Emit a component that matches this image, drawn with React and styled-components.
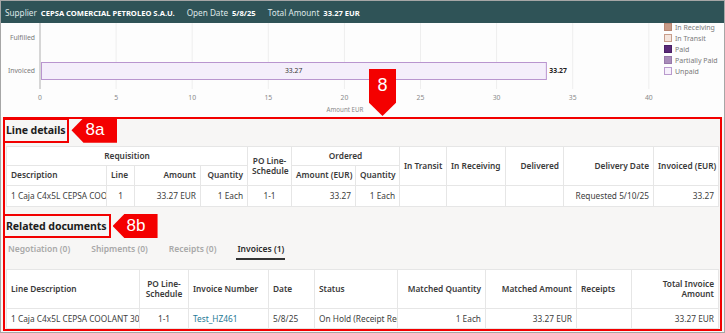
import styled, { createGlobalStyle } from "styled-components";

const GlobalStyle = createGlobalStyle`
  html, body {
    margin: 0;
    padding: 0;
    background: #ffffff;
  }
  * {
    box-sizing: border-box;
  }
`;

const Page = styled.div`
  position: relative;
  width: 725px;
  height: 333px;
  overflow: hidden;
  border: 1px solid #a6a6a6;
  background: #f7f6f5;
  font-family: "Noto Sans", "Open Sans", sans-serif;
  color: #333;
`;

const TopBar = styled.div`
  height: 22px;
  display: flex;
  align-items: center;
  gap: 12px;
  padding-left: 4px;
  background: #2f5357;
  color: #fff;
  font-size: 8.2px;
`;

const Field = styled.span`
  display: flex;
  align-items: baseline;
  gap: 4px;
  color: #dfe7e7;
  white-space: nowrap;

  b {
    color: #fff;
    font-weight: 700;
    font-size: 7.6px;
  }
`;

const ChartRow = styled.div`
  height: 94px;
  display: flex;
  background: #fdfdfd;
`;

const Legend = styled.ul`
  list-style: none;
  margin: 0;
  padding: 0 0 0 6px;
  display: flex;
  flex-direction: column;
  gap: 3px;
`;

const LegendItem = styled.li`
  display: flex;
  align-items: center;
  gap: 3px;
  height: 8px;
  font-size: 7px;
  color: #7a7a7a;

  &::before {
    content: "";
    width: 6px;
    height: 6px;
    background: ${(p) => p.$fill};
    border: 1px solid ${(p) => p.$stroke};
  }
`;

const Marker = styled.div`
  position: absolute;
  left: 368px;
  top: 68px;
  width: 27px;
  height: 47px;
  background: #f40000;
  clip-path: polygon(0 0, 100% 0, 100% 72%, 50% 100%, 0 72%);
  color: #fff;
  font-family: "Liberation Sans", Arial, sans-serif;
  font-size: 18px;
  text-align: center;
  padding-top: 6px;
`;

const Frame = styled.section`
  margin: 0 2px;
  height: 214px;
  border: 2px solid #f20000;
  display: flex;
  flex-direction: column;
`;

const HeadingRow = styled.div`
  display: flex;
  align-items: stretch;
  gap: 2px;
  height: 25px;
  margin: ${(p) => p.$margin};
`;

const HeadingBox = styled.h2`
  margin: 0;
  display: flex;
  align-items: center;
  padding: 0 2px 0 1px;
  border: 2px solid #f20000;
  font-size: 10.6px;
  font-weight: 700;
  color: #1d1d1d;
  white-space: nowrap;
  letter-spacing: -0.1px;
`;

const Badge = styled.div`
  width: ${(p) => p.$width}px;
  background: #f40000;
  clip-path: polygon(0 50%, 12px 0, 100% 0, 100% 100%, 12px 100%);
  color: #fff;
  font-family: "Liberation Sans", Arial, sans-serif;
  font-size: 17px;
  display: flex;
  align-items: center;
  padding-left: 14px;
`;

const Table = styled.table`
  table-layout: fixed;
  border-collapse: collapse;
  width: 712px;
  margin: ${(p) => p.$margin};
  background: #fff;
  font-size: 8.3px;

  th, td {
    border: 1px solid #e6e6e6;
    padding: 0 4px;
    white-space: nowrap;
    overflow: hidden;
    text-overflow: clip;
    text-align: left;
  }

  th {
    font-weight: 600;
    color: #3a3a3a;
    line-height: 10px;
  }

  td {
    color: #404040;
  }

  .r { text-align: right; }
  .c { text-align: center; }
  .wrap { white-space: normal; }
`;

const Tabs = styled.nav`
  display: flex;
  gap: 19px;
  height: 22px;
  padding-left: 1px;
  margin-left: 1px;
`;

const Tab = styled.span`
  display: flex;
  align-items: center;
  padding: 0 1px;
  font-size: 8.5px;
  font-weight: 600;
  color: ${(p) => (p.$active ? "#2b2b2b" : "#a9a9a9")};
  border-bottom: 2px solid ${(p) => (p.$active ? "#333" : "transparent")};
`;

const Link = styled.span`
  color: #1f7996;
`;

const ticks = [0, 5, 10, 15, 20, 25, 30, 35, 40];
const xOf = (v) => 39 + v * 15.22;

const Chart = () => (
  <svg width="657" height="94" viewBox="0 0 657 94">
    {ticks.slice(1).map((t) => (
      <line key={t} x1={xOf(t)} x2={xOf(t)} y1="0" y2="66" stroke="#eeeeee" strokeWidth="1" />
    ))}
    <line x1="39" x2="39" y1="0" y2="66" stroke="#d6d6d6" strokeWidth="2" />
    <g fontFamily="Noto Sans, sans-serif" fontSize="6.8" fill="#7a7a7a" textAnchor="end">
      <text x="34" y="17">Fulfilled</text>
      <text x="34" y="50">Invoiced</text>
    </g>
    <rect x="40.5" y="39.5" width={xOf(33.27) - 40.5} height="17" fill="#f4eefb" stroke="#b995cf" strokeWidth="1" />
    <text x={(40 + xOf(33.27)) / 2} y="50" fontFamily="Noto Sans, sans-serif" fontSize="6.8" fill="#333" textAnchor="middle">33.27</text>
    <text x={xOf(33.27) + 3} y="50" fontFamily="Noto Sans, sans-serif" fontSize="6.8" fontWeight="700" fill="#222">33.27</text>
    <g fontFamily="Noto Sans, sans-serif" fontSize="6.8" fill="#8a8a8a" textAnchor="middle">
      {ticks.map((t) => (
        <text key={t} x={xOf(t)} y="77">{t}</text>
      ))}
      <text x="344" y="89" fontSize="6.2">Amount EUR</text>
    </g>
  </svg>
);

const legend = [
  ["In Receiving", "#c89a86", "#b88672"],
  ["In Transit", "#f4e4dc", "#c79d8b"],
  ["Paid", "#5a2a78", "#4a1f66"],
  ["Partially Paid", "#a88cb9", "#9677a9"],
  ["Unpaid", "#f6f0fb", "#b99acd"],
];

export default function App() {
  return (
    <>
      <GlobalStyle />
      <Page>
        <TopBar>
          <Field>Supplier <b>CEPSA COMERCIAL PETROLEO S.A.U.</b></Field>
          <Field>Open Date <b>5/8/25</b></Field>
          <Field>Total Amount <b>33.27 EUR</b></Field>
        </TopBar>

        <ChartRow>
          <Chart />
          <Legend>
            {legend.map(([label, fill, stroke]) => (
              <LegendItem key={label} $fill={fill} $stroke={stroke}>{label}</LegendItem>
            ))}
          </Legend>
        </ChartRow>

        <Marker>8</Marker>

        <Frame>
          <HeadingRow $margin="-1px 0 0 -2px">
            <HeadingBox>Line details</HeadingBox>
            <Badge $width={46}>8a</Badge>
          </HeadingRow>

          <Table $margin="3px 0 0 1px">
            <colgroup>
              {[100, 28, 66, 47, 44, 64, 44, 47, 59, 58, 90, 65].map((w, i) => (
                <col key={i} style={{ width: w }} />
              ))}
            </colgroup>
            <thead>
              <tr style={{ height: 19 }}>
                <th colSpan={4} className="c">Requisition</th>
                <th rowSpan={2} className="c wrap">PO Line-<br />Schedule</th>
                <th colSpan={2} className="c">Ordered</th>
                <th rowSpan={2}>In Transit</th>
                <th rowSpan={2}>In Receiving</th>
                <th rowSpan={2} className="r">Delivered</th>
                <th rowSpan={2} className="r">Delivery Date</th>
                <th rowSpan={2} className="r">Invoiced (EUR)</th>
              </tr>
              <tr style={{ height: 20 }}>
                <th>Description</th>
                <th>Line</th>
                <th className="r">Amount</th>
                <th className="r">Quantity</th>
                <th className="r">Amount (EUR)</th>
                <th className="r">Quantity</th>
              </tr>
            </thead>
            <tbody>
              <tr style={{ height: 21 }}>
                <td>1 Caja C4x5L CEPSA COOLANT 30%</td>
                <td className="c">1</td>
                <td className="r">33.27 EUR</td>
                <td className="r">1 Each</td>
                <td className="c">1-1</td>
                <td className="r">33.27</td>
                <td className="r">1 Each</td>
                <td></td>
                <td></td>
                <td></td>
                <td className="r">Requested 5/10/25</td>
                <td className="r">33.27</td>
              </tr>
            </tbody>
          </Table>

          <HeadingRow $margin="7px 0 0 -2px">
            <HeadingBox>Related documents</HeadingBox>
            <Badge $width={45}>8b</Badge>
          </HeadingRow>

          <Tabs>
            <Tab>Negotiation (0)</Tab>
            <Tab>Shipments (0)</Tab>
            <Tab>Receipts (0)</Tab>
            <Tab $active>Invoices (1)</Tab>
          </Tabs>

          <Table $margin="9px 0 0 1px">
            <colgroup>
              {[133, 49, 80, 46, 83, 88, 91, 55, 87].map((w, i) => (
                <col key={i} style={{ width: w }} />
              ))}
            </colgroup>
            <thead>
              <tr style={{ height: 39 }}>
                <th>Line Description</th>
                <th className="c wrap">PO Line-<br />Schedule</th>
                <th>Invoice Number</th>
                <th>Date</th>
                <th>Status</th>
                <th className="r">Matched Quantity</th>
                <th className="r">Matched Amount</th>
                <th>Receipts</th>
                <th className="r wrap">Total Invoice<br />Amount</th>
              </tr>
            </thead>
            <tbody>
              <tr style={{ height: 20 }}>
                <td>1 Caja C4x5L CEPSA COOLANT 30%</td>
                <td className="c">1-1</td>
                <td><Link>Test_HZ461</Link></td>
                <td>5/8/25</td>
                <td>On Hold (Receipt Required)</td>
                <td className="r">1 Each</td>
                <td className="r">33.27 EUR</td>
                <td></td>
                <td className="r">33.27 EUR</td>
              </tr>
            </tbody>
          </Table>
        </Frame>
      </Page>
    </>
  );
}
